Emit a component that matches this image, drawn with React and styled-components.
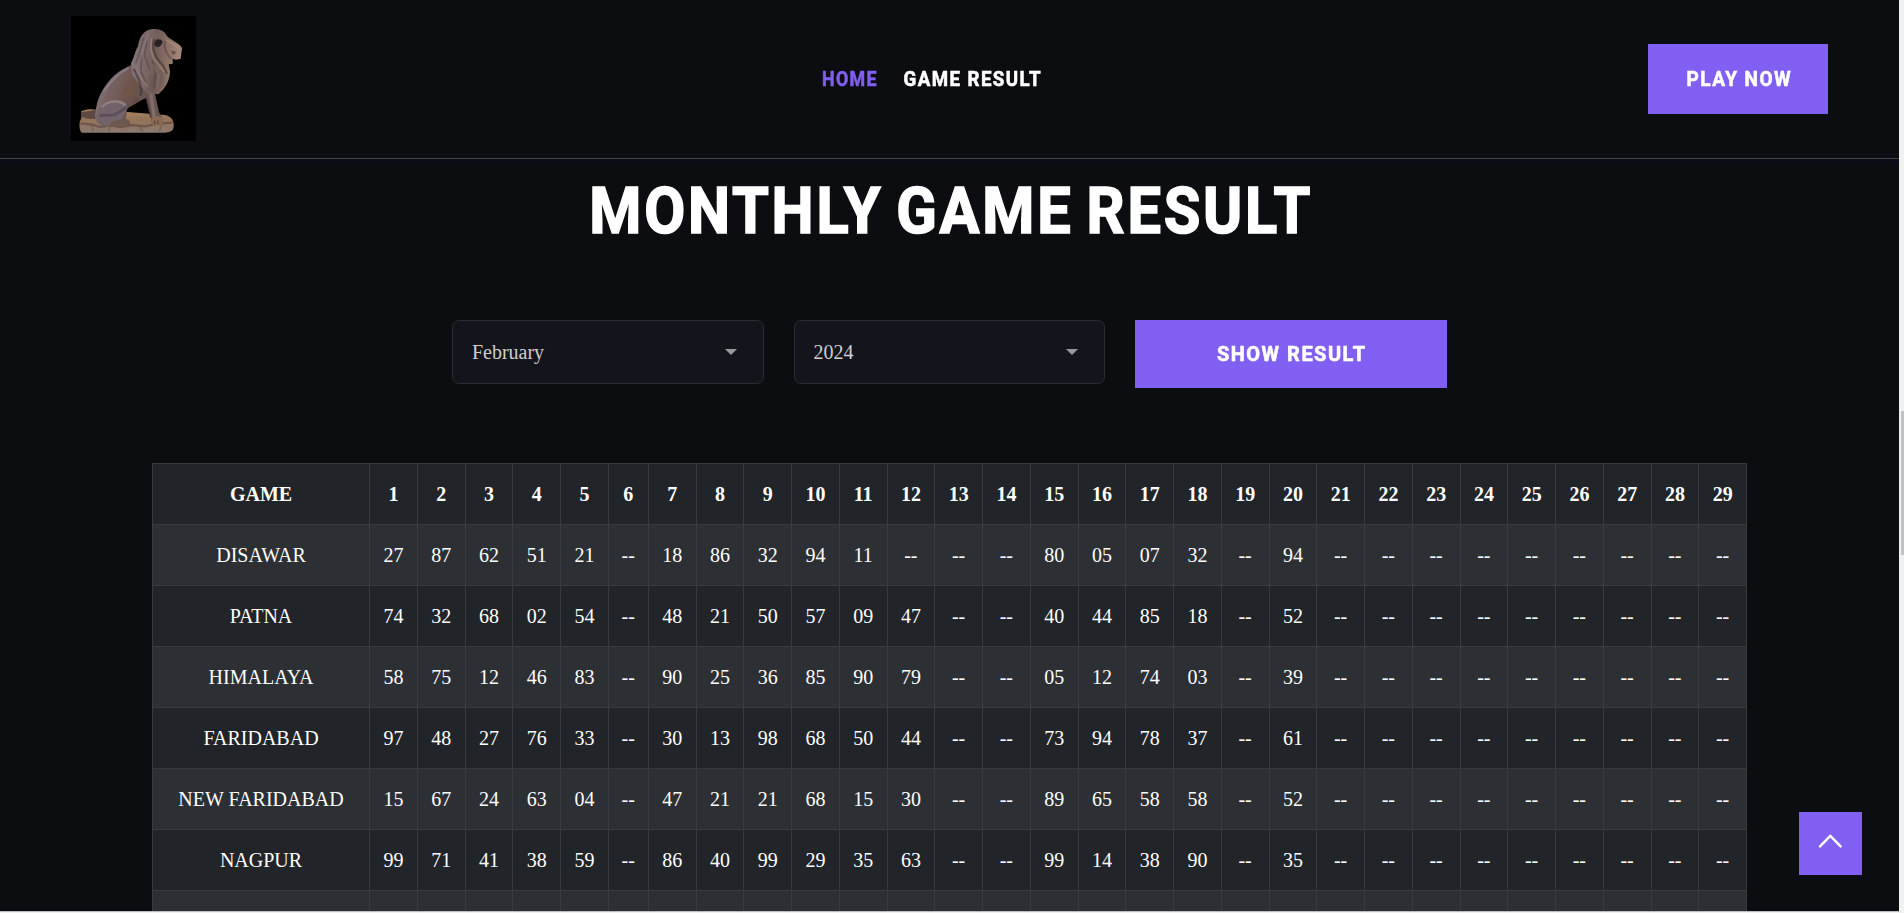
import React from "react";
import styled, { createGlobalStyle } from "styled-components";

const Global = createGlobalStyle`
  * { box-sizing: border-box; }
  html, body { margin: 0; padding: 0; overflow: hidden; background: #0c0d10; }
`;

const display = `
  font-family: Roboto, "Liberation Sans", sans-serif;
  font-weight: 700;
  text-transform: uppercase;
  -webkit-text-stroke: 0.6px currentColor;
`;

const Window = styled.div`
  display: grid;
  grid-template-columns: 1fr 5px;
  grid-template-rows: 911px 2px;
  width: 1904px;
  height: 913px;
  overflow: hidden;
  position: relative;
  font-family: "Liberation Serif", "Times New Roman", serif;
  font-size: 20px;
  color: #fff;
`;

const Page = styled.div`
  overflow: hidden;
  background: #0c0d10;
`;

const ScrollTrack = styled.div`
  grid-row: span 2;
  background: #f1f1f1;
  padding: 411px 0 0 2px;
`;

const ScrollThumb = styled.div`
  height: 144px;
  background: #c1c1c1;
`;

const BottomEdge = styled.div`
  background: #f1f1f1;
  border-top: 1px solid #bdbdbd;
`;

const Header = styled.header`
  display: flex;
  justify-content: space-between;
  align-items: center;
  height: 159px;
  padding: 0 71px;
  border-bottom: 1px solid #434346;
`;

const Logo = styled.div`
  width: 125px;
  height: 125px;
  margin-bottom: 1px;
  background: #000;
`;

const Nav = styled.nav`
  display: flex;
  gap: 26px;
  margin: 0 0 1px 19px;
`;

const Condensed = styled.span`
  display: flex;
  justify-content: center;
  width: ${(p) => p.$width}px;
  white-space: nowrap;
  letter-spacing: ${(p) => p.$track}px;
  > span {
    margin-right: -${(p) => p.$track}px;
    transform: scaleX(${(p) => p.$scale});
  }
`;

const NavLink = styled.a`
  ${display}
  font-size: 21px;
  line-height: 30px;
  color: ${(p) => (p.$active ? "#815ef2" : "#fff")};
`;

const Button = styled.button`
  ${display}
  display: flex;
  align-items: center;
  justify-content: center;
  width: ${(p) => p.$w}px;
  height: ${(p) => p.$h}px;
  padding: 0;
  border: 0;
  background: #815ff2;
  color: #fff;
  font-size: 21px;
`;

const Section = styled.section`
  display: flex;
  flex-direction: column;
  align-items: center;
  background: linear-gradient(#0b0e17, #0b0e17 4px, #0c0d10 8px);
`;

const Title = styled.h1`
  ${display}
  margin: 13px 0 0;
  font-size: 64px;
  line-height: 80px;
  word-spacing: -5px;
  -webkit-text-stroke-width: 1.6px;
`;

const Filters = styled.div`
  display: flex;
  align-items: flex-start;
  gap: 30px;
  margin-top: 68px;
`;

const Select = styled.div`
  display: flex;
  justify-content: space-between;
  align-items: center;
  width: 311.6px;
  height: 64px;
  padding: 1px 26px 0 19px;
  border: 1px solid #2b2b31;
  border-radius: 7px;
  background: #14141d;
  color: #cfcfcf;
`;

const Caret = styled.i`
  margin-bottom: 1px;
  border: solid transparent;
  border-width: 6px 6px 0;
  border-top-color: #999;
`;

const Results = styled.table`
  width: 1595px;
  margin-top: 75px;
  table-layout: fixed;
  border-collapse: collapse;
  text-align: center;
`;

const Row = styled.tr`
  height: 61px;
  background: ${(p) => (p.$striped ? "#2c2f33" : "#212428")};
`;

const Cell = styled.td`
  padding: 0;
  border: 1px solid #373b3e;
  font-weight: ${(p) => (p.$head ? 700 : 400)};
`;

const BackToTop = styled.button`
  position: absolute;
  left: 1799px;
  top: 812px;
  width: 63px;
  height: 63px;
  padding: 0;
  border: 0;
  background: #815ff2;
`;

const days = Array.from({ length: 29 }, (_, i) => String(i + 1));
const games = [
  ["DISAWAR", "27 87 62 51 21 -- 18 86 32 94 11 -- -- -- 80 05 07 32 -- 94"],
  ["PATNA", "74 32 68 02 54 -- 48 21 50 57 09 47 -- -- 40 44 85 18 -- 52"],
  ["HIMALAYA", "58 75 12 46 83 -- 90 25 36 85 90 79 -- -- 05 12 74 03 -- 39"],
  ["FARIDABAD", "97 48 27 76 33 -- 30 13 98 68 50 44 -- -- 73 94 78 37 -- 61"],
  ["NEW FARIDABAD", "15 67 24 63 04 -- 47 21 21 68 15 30 -- -- 89 65 58 58 -- 52"],
  ["NAGPUR", "99 71 41 38 59 -- 86 40 99 29 35 63 -- -- 99 14 38 90 -- 35"],
];

function Lion() {
  return (
    <svg width="125" height="125" viewBox="0 0 375 375" fill="none">
      <defs>
        <linearGradient id="body" x1="0" y1="0.2" x2="1" y2="0.6">
          <stop offset="0" stopColor="#8b8290" />
          <stop offset=".3" stopColor="#776260" />
          <stop offset=".7" stopColor="#6a5148" />
          <stop offset="1" stopColor="#4e3f3d" />
        </linearGradient>
        <linearGradient id="mane" x1="0" y1="0.3" x2="1" y2="0.4">
          <stop offset="0" stopColor="#85777c" />
          <stop offset=".5" stopColor="#735e59" />
          <stop offset="1" stopColor="#a98a7a" />
        </linearGradient>
        <linearGradient id="base" x1="0" y1="0" x2="0" y2="1">
          <stop offset="0" stopColor="#a98562" />
          <stop offset=".45" stopColor="#947459" />
          <stop offset="1" stopColor="#8a7770" />
        </linearGradient>
        <filter id="soft"><feGaussianBlur stdDeviation="2" /></filter>
        <filter id="shade"><feGaussianBlur stdDeviation="5" /></filter>
      </defs>
      <g filter="url(#soft)">
        <path d="M31 285Q55 276 78 282L170 288L270 296Q294 296 303 309Q312 325 306 340Q300 350 282 350H34Q23 347 26 318L31 306Z" fill="url(#base)" />
        <path d="M28 322L60 325L88 333L118 328L150 333L182 327L222 331L260 323L304 320" stroke="#5c473d" strokeWidth="7" opacity=".65" />
        <path d="M60 329L67 346M118 331L112 347M205 331L215 347M272 325L265 347" stroke="#5e493f" strokeWidth="5" opacity=".4" />
        <path d="M30 288Q53 285 77 281L80 308Q52 311 32 303Z" fill="#5d4942" />
        <path d="M184 146C143 161 116 187 97 219C82 242 75 270 72 300Q75 327 101 330L176 326Q181 313 163 309L171 276L229 243L240 171Z" fill="url(#body)" />
        <path d="M165 282L219 250L222 288L168 288Z" fill="#000" />
        <path d="M184 180Q158 210 153 246L210 246L224 210Z" fill="#705348" opacity=".6" filter="url(#shade)" />
        <path d="M112 256C143 244 172 257 168 276C164 302 148 315 124 328Q90 333 79 309C76 283 91 266 112 256Z" fill="#71636b" />
        <path d="M92 274C110 253 146 251 163 268" stroke="#a8918d" strokeWidth="7" opacity=".6" />
        <path d="M86 300C106 292 118 305 137 293S159 278 166 273" stroke="#403641" strokeWidth="8" opacity=".45" />
        <path d="M121 318Q155 304 177 318L176 329L113 330Z" fill="#6d5951" />
        <path d="M196 216L250 224L264 289L276 308L274 323H243L239 301L225 247L207 253L198 247Z" fill="#665451" />
        <path d="M239 225L247 285L250 309" stroke="#94807a" strokeWidth="10" opacity=".6" />
        <path d="M225 245L239 305" stroke="#352c2c" strokeWidth="5" opacity=".6" />
        <path d="M244 304Q272 295 279 313L274 326H243Z" fill="#8a6b54" />
        <path d="M251 314V324M261 313V325" stroke="#4a3830" strokeWidth="3" />
        <path d="M226 45C243 36 266 38 280 49L291 64L314 79Q330 88 333 97L329 128L315 131L305 128L305 144L293 145L297 165C297 194 282 218 262 235L230 232L210 213L183 175L180 142C192 120 190 109 201 91C205 65 214 53 226 45Z" fill="url(#mane)" />
        <path d="M272 157Q290 186 271 214L256 230L225 226L235 181Z" fill="#65534e" opacity=".5" filter="url(#shade)" />
        <path d="M255 71Q270 67 275 77Q272 92 259 93Q247 90 250 80Z" fill="#2a2223" />
        <path d="M249 69C241 101 254 127 276 148L288 173" stroke="#3d3030" strokeWidth="7" opacity=".55" />
        <path d="M243 65C234 98 242 122 260 143L281 169" stroke="#aa8d80" strokeWidth="5" opacity=".55" />
        <path d="M218 64L205 112L194 142M228 76L220 117L236 160M212 118L210 166L225 199M243 132L254 169L248 214" stroke="#463b40" strokeWidth="5" opacity=".45" />
        <path d="M233 53L217 93L210 131M245 144L264 180L258 219M195 154L209 185L231 213" stroke="#a39290" strokeWidth="4" opacity=".35" />
        <path d="M286 72L307 84L324 98" stroke="#b1937f" strokeWidth="6" opacity=".5" />
        <path d="M282 74Q277 95 290 115L301 129" stroke="#4a3936" strokeWidth="7" opacity=".4" />
        <path d="M302 103L316 108L309 117L301 111Z" fill="#3d2e2c" opacity=".5" />
        <path d="M188 158L203 190L211 220L209 240" stroke="#352b2b" strokeWidth="7" opacity=".5" />
        <path d="M100 225Q130 177 173 156" stroke="#9b91a8" strokeWidth="6" opacity=".5" />
      </g>
    </svg>
  );
}

const Fit = ({ width, scale, track = 1.6, children }) => (
  <Condensed $width={width} $scale={scale} $track={track}><span>{children}</span></Condensed>
);

export default function App() {
  return (
    <Window>
      <Global />
      <Page>
        <Header>
          <Logo><Lion /></Logo>
          <Nav>
            <NavLink $active><Fit width={55} scale={0.85}>Home</Fit></NavLink>
            <NavLink><Fit width={138} scale={0.89}>Game Result</Fit></NavLink>
          </Nav>
          <Button $w={180} $h={70}><Fit width={105} scale={0.905}>Play Now</Fit></Button>
        </Header>
        <Section>
          <Title><Fit width={722} scale={0.93} track={3}>Monthly Game Result</Fit></Title>
          <Filters>
            <Select>February<Caret /></Select>
            <Select>2024<Caret /></Select>
            <Button $w={312} $h={68}><Fit width={149} scale={0.95}>Show Result</Fit></Button>
          </Filters>
          <Results>
            <colgroup>
              <col style={{ width: 217 }} />
              {days.map((d) => <col key={d} style={{ width: d === "6" ? 40 : 47.75 }} />)}
            </colgroup>
            <tbody>
              <Row>
                <Cell as="th" $head>GAME</Cell>
                {days.map((d) => <Cell as="th" $head key={d}>{d}</Cell>)}
              </Row>
              {games.map(([name, values], i) => {
                const list = values.split(" ");
                return (
                  <Row key={name} $striped={i % 2 === 0}>
                    <Cell>{name}</Cell>
                    {days.map((d, j) => <Cell key={d}>{list[j] || "--"}</Cell>)}
                  </Row>
                );
              })}
              <Row $striped>
                <Cell />
                {days.map((d) => <Cell key={d} />)}
              </Row>
            </tbody>
          </Results>
        </Section>
      </Page>
      <ScrollTrack><ScrollThumb /></ScrollTrack>
      <BottomEdge />
      <BackToTop aria-label="Back to top">
        <svg width="63" height="63" viewBox="0 0 63 63" fill="none" stroke="#fff" strokeWidth="2.5" strokeLinecap="round" strokeLinejoin="round">
          <path d="M21 34.3L31.3 23.8L41.6 34.3" />
        </svg>
      </BackToTop>
    </Window>
  );
}
